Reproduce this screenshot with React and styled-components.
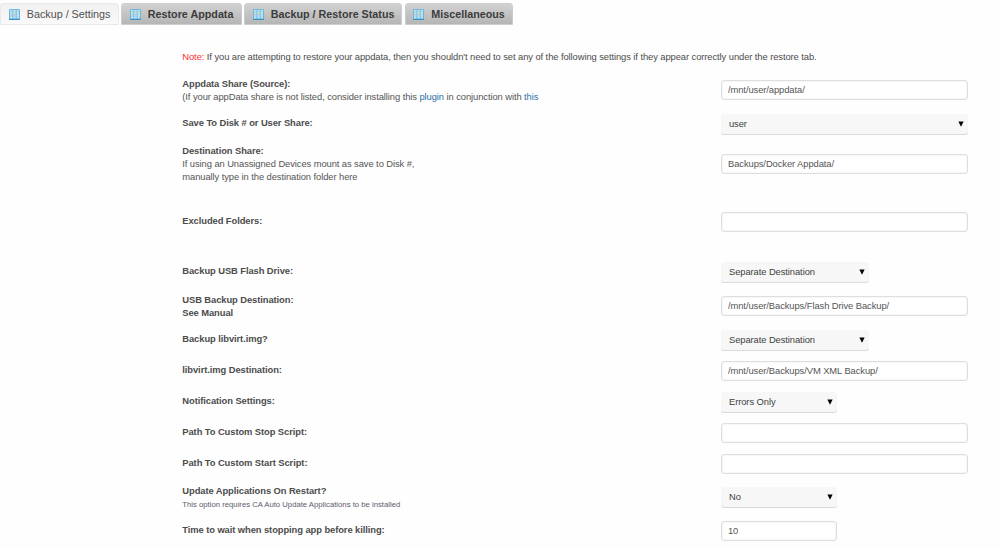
import React from 'react';
import styled, { createGlobalStyle } from 'styled-components';

const GlobalStyle = createGlobalStyle`
  * { box-sizing: border-box; }
  body {
    margin: 0;
    background: #fefefe;
    color: #4c4c4c;
    font-family: "Liberation Sans", Arial, sans-serif;
    font-size: 9.4px;
    letter-spacing: -0.082px;
    line-height: 13px;
  }
`;

const Page = styled.div`
  width: 1000px;
  height: 548px;
  overflow: hidden;
`;

const TabBar = styled.nav`
  display: flex;
  gap: 2.5px;
  padding-top: 3px;
`;

const Tab = styled.button`
  display: flex;
  align-items: center;
  gap: 7.3px;
  width: ${(p) => p.$width}px;
  height: 22px;
  padding: 0 0 0 7.5px;
  border: 1px solid ${(p) => (p.$active ? '#e9e9e9' : '#cdcdcd')};
  border-radius: 3px 3px 0 0;
  background: ${(p) =>
    p.$active ? 'linear-gradient(#f1f1f1, #f9f9f9)' : 'linear-gradient(#d2d2d2, #b5b5b5)'};
  color: ${(p) => (p.$active ? '#505050' : '#3c3c3c')};
  font-family: inherit;
  font-size: 10.75px;
  font-weight: ${(p) => (p.$active ? 400 : 700)};
  white-space: nowrap;
`;

const IconSvg = styled.svg`
  flex: none;
  width: 11px;
  height: 11px;
`;

const Content = styled.main`
  padding: 24.7px 32px 0 182.3px;
`;

const Note = styled.p`
  margin: 0 0 14.6px;
  white-space: nowrap;
`;

const Warning = styled.span`
  color: #f8312f;
`;

const Row = styled.div`
  display: grid;
  grid-template-columns: 538.7px 247px;
  align-items: center;
  height: ${(p) => p.$height}px;
  margin-top: ${(p) => p.$gap}px;
`;

const Label = styled.div`
  padding-bottom: ${(p) => p.$lift || 0}px;
  white-space: nowrap;
`;

const Title = styled.div`
  font-weight: 700;
`;

const Hint = styled.div`
  color: #555;
`;

const SmallHint = styled.div`
  color: #5d5d6c;
  font-size: 7.73px;
  letter-spacing: 0;
  line-height: 15px;
`;

const Link = styled.a`
  color: #2c70a8;
  text-decoration: none;
`;

const TextInput = styled.input`
  width: ${(p) => p.$width || 247}px;
  height: 20px;
  padding: 0 6px 1px;
  border: 1px solid #dedede;
  border-radius: 3px;
  outline: none;
  background: #fff;
  box-shadow: inset 0 0 2px #e4e4e4;
  color: #555;
  font: inherit;
  letter-spacing: inherit;
`;

const SelectBox = styled.div`
  display: grid;
  grid-template-columns: 1fr 14px;
  align-items: center;
  width: ${(p) => p.$width}px;
  height: 21px;
  padding: 0 0 2px 8px;
  border-radius: 3px;
  background: #f7f7f7;
  box-shadow: inset 0 -1px 0 #dadada;
  color: #3f3f3f;
`;

const Arrow = styled.svg`
  width: 6px;
  height: 6px;
  margin: 1px 0 0 4px;
`;

function GridIcon() {
  return (
    <IconSvg viewBox="0 0 11 11">
      <rect width="11" height="11" rx="1" fill="#6db6dc" />
      <rect y="9.5" width="11" height="1.5" rx=".7" fill="#3a8fc4" />
      {[1, 4.3, 7.6].map((x) => (
        <g key={x}>
          <rect x={x} y="1" width="2.4" height="8.6" fill="#c3e9f8" />
          <path d={`M${x} 2.6h2.4M${x} 5.2h2.4M${x} 7.8h2.4`} stroke="#86c5e5" strokeWidth=".6" />
        </g>
      ))}
      <path d="M5 3.6h1.2M8.3 3.6h1.2" stroke="#e6dc72" />
      <path d="M1.6 3.8h1" stroke="#9ed49b" />
      <path d="M1.8 6.4h1M5 6.2h1" stroke="#e5a79b" />
    </IconSvg>
  );
}

function Select({ value, width }) {
  return (
    <SelectBox $width={width} role="combobox" aria-expanded="false">
      <span>{value}</span>
      <Arrow viewBox="0 0 6 6">
        <path d="M.4 .4h5.2L3 5.8z" fill="#000" />
      </Arrow>
    </SelectBox>
  );
}

const tabs = [
  { label: 'Backup / Settings', width: 118.5, active: true },
  { label: 'Restore Appdata', width: 120.5 },
  { label: 'Backup / Restore Status', width: 158 },
  { label: 'Miscellaneous', width: 108.5 },
];

const rows = [
  {
    title: 'Appdata Share (Source):',
    hint: (
      <Hint>
        (If your appData share is not listed, consider installing this <Link>plugin</Link> in
        conjunction with <Link>this</Link>
      </Hint>
    ),
    height: 26, gap: 0, input: '/mnt/user/appdata/',
  },
  { title: 'Save To Disk # or User Share:', height: 21, gap: 11, lift: 4, select: 'user', width: 247 },
  {
    title: 'Destination Share:',
    hint: (
      <Hint>
        If using an Unassigned Devices mount as save to Disk #,
        <br />
        manually type in the destination folder here
      </Hint>
    ),
    height: 39, gap: 8.8, input: 'Backups/Docker Appdata/',
  },
  { title: 'Excluded Folders:', height: 20, gap: 29.2, lift: 2.8, input: '' },
  { title: 'Backup USB Flash Drive:', height: 21, gap: 29.5, lift: 3.5, select: 'Separate Destination', width: 148 },
  {
    title: 'USB Backup Destination:', hint: <Title>See Manual</Title>,
    height: 27, gap: 10, lift: 1.4, input: '/mnt/user/Backups/Flash Drive Backup/',
  },
  { title: 'Backup libvirt.img?', height: 21, gap: 10.5, lift: 4.4, select: 'Separate Destination', width: 148 },
  { title: 'libvirt.img Destination:', height: 20, gap: 10, lift: 3.4, input: '/mnt/user/Backups/VM XML Backup/' },
  { title: 'Notification Settings:', height: 21, gap: 10.5, lift: 3.5, select: 'Errors Only', width: 116 },
  { title: 'Path To Custom Stop Script:', height: 20, gap: 10, lift: 2.5, input: '' },
  { title: 'Path To Custom Start Script:', height: 20, gap: 11, lift: 2.5, input: '' },
  {
    title: 'Update Applications On Restart?',
    hint: <SmallHint>This option requires CA Auto Update Applications to be installed</SmallHint>,
    height: 28, gap: 10, select: 'No', width: 116,
  },
  { title: 'Time to wait when stopping app before killing:', height: 20, gap: 9.2, lift: 3, input: '10', width: 116 },
];

export default function App() {
  return (
    <Page>
      <GlobalStyle />
      <TabBar>
        {tabs.map((t) => (
          <Tab key={t.label} $width={t.width} $active={t.active}>
            <GridIcon />
            <span>{t.label}</span>
          </Tab>
        ))}
      </TabBar>
      <Content>
        <Note>
          <Warning>Note:</Warning> If you are attempting to restore your appdata, then you
          shouldn't need to set any of the following settings if they appear correctly under the
          restore tab.
        </Note>
        {rows.map((r) => (
          <Row key={r.title} $height={r.height} $gap={r.gap}>
            <Label $lift={r.lift}>
              <Title>{r.title}</Title>
              {r.hint}
            </Label>
            {r.select ? (
              <Select value={r.select} width={r.width} />
            ) : (
              <TextInput $width={r.width} defaultValue={r.input} aria-label={r.title} />
            )}
          </Row>
        ))}
      </Content>
    </Page>
  );
}
